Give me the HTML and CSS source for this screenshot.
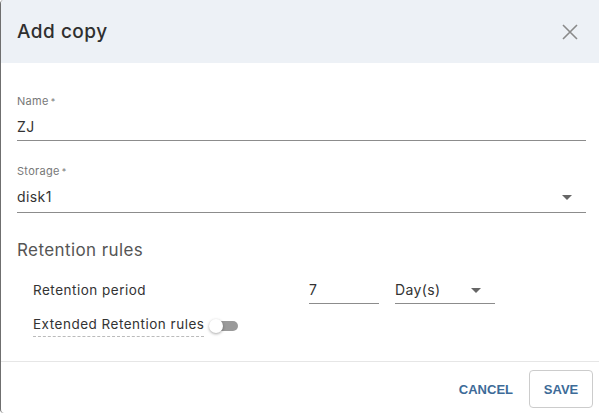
FILE: index.html
```html
<!DOCTYPE html>
<html>
<head>
  <title>Add copy</title>
  <link rel="stylesheet" href="styles.css">
</head>
<body>
  <div class="dialog">
    <div class="dialog-header">
      <h2>Add copy</h2>
      <button class="close-button" aria-label="Close">
        <svg width="16" height="16" viewBox="0 0 16 16"><path d="M1 1 L15 15 M15 1 L1 15" stroke="#8a8a8a" stroke-width="1.6" fill="none"/></svg>
      </button>
    </div>

    <div class="dialog-body">
      <div class="field">
        <label>Name<span class="req">*</span></label>
        <div class="field-input">ZJ</div>
      </div>

      <div class="field">
        <label>Storage<span class="req">*</span></label>
        <div class="field-input select">disk1<span class="caret"></span></div>
      </div>

      <h3>Retention rules</h3>

      <div class="rule-row">
        <span class="rule-label">Retention period</span>
        <div class="small-input">7</div>
        <div class="small-input unit select">Day(s)<span class="caret"></span></div>
      </div>

      <div class="rule-row extended">
        <span class="rule-label dashed">Extended Retention rules</span>
        <span class="toggle"><span class="knob"></span></span>
      </div>
    </div>

    <div class="dialog-footer">
      <button class="text-button">CANCEL</button>
      <button class="outline-button">SAVE</button>
    </div>
  </div>
</body>
</html>
```

FILE: styles.css
```css
/* Dialog styles */
body {
  margin: 0;
  background-color: #fff;
  font-family: "Inter", "Open Sans", sans-serif;
  color: #333;
}
.dialog {
  width: 599px;
  height: 413px;
  box-sizing: border-box;
  border-left: 1px solid #6f6f6f;
  border-radius: 4px 0 0 4px;
  overflow: hidden;
  display: flex;
  flex-direction: column;
}
.dialog-header {
  height: 63px;
  flex-shrink: 0;
  background-color: #edf1f6;
  display: flex;
  align-items: center;
  justify-content: space-between;
  padding: 0 21px 0 16px;
}
.dialog-header h2 {
  margin: 0;
  font-size: 19px;
  font-weight: 500;
  letter-spacing: 0.5px;
  color: #2f2f2f;
}
.close-button {
  background: none;
  border: none;
  padding: 0;
  width: 16px;
  height: 16px;
  cursor: pointer;
}
.dialog-body {
  flex-grow: 1;
  padding: 31px 13px 0 16px;
}
.field {
  margin-bottom: 23px;
}
.field label {
  display: block;
  font-size: 11px;
  line-height: 15px;
  letter-spacing: 0.3px;
  color: #777;
  margin-bottom: 8px;
}
.req {
  font-size: 9px;
  vertical-align: top;
  margin-left: 2px;
}
.field-input {
  font-size: 14px;
  line-height: 19px;
  letter-spacing: 0.4px;
  color: #333;
  padding-bottom: 4px;
  border-bottom: 1px solid #8c8c8c;
  position: relative;
}
.field-input.select {
  padding-bottom: 6px;
}
.caret {
  position: absolute;
  right: 14px;
  top: 8px;
  border-left: 5px solid transparent;
  border-right: 5px solid transparent;
  border-top: 5px solid #666;
}
.dialog-body h3 {
  margin: 25px 0 0;
  font-size: 17px;
  line-height: 24px;
  font-weight: 400;
  letter-spacing: 0.4px;
  color: #555;
}
.rule-row {
  display: flex;
  align-items: flex-end;
  padding-left: 16px;
  margin-top: 18px;
}
.rule-label {
  width: 276px;
  font-size: 13.5px;
  line-height: 19px;
  letter-spacing: 0.5px;
  color: #333;
  padding-bottom: 4px;
}
.small-input {
  width: 70px;
  font-size: 14px;
  line-height: 19px;
  letter-spacing: 0.4px;
  padding-bottom: 4px;
  border-bottom: 1px solid #8c8c8c;
  margin-right: 16px;
}
.small-input.unit {
  width: 100px;
  position: relative;
}
.extended {
  margin-top: 11px;
  align-items: center;
}
.rule-label.dashed {
  width: auto;
  padding-bottom: 2px;
  border-bottom: 1px dashed #bbb;
}
.toggle {
  position: relative;
  width: 28px;
  height: 10px;
  background-color: #9a9a9a;
  border-radius: 5px;
  margin-left: 6px;
}
.knob {
  position: absolute;
  left: -1px;
  top: -2px;
  width: 14px;
  height: 14px;
  border-radius: 50%;
  background-color: #fff;
  box-shadow: 0 1px 3px rgba(0, 0, 0, 0.35);
}
.dialog-footer {
  border-top: 1px solid #e6e6e6;
  display: flex;
  justify-content: flex-end;
  align-items: center;
  padding: 8px 6px 5px 0;
  gap: 16px;
}
.text-button,
.outline-button {
  font-family: "Liberation Sans", Arial, sans-serif;
  font-weight: bold;
  font-size: 13px;
  color: #3d6b98;
  background: #fff;
  cursor: pointer;
}
.text-button {
  border: none;
  padding: 8px 0;
}
.outline-button {
  border: 1px solid #ccc;
  border-radius: 4px;
  width: 64px;
  height: 38px;
}
```
